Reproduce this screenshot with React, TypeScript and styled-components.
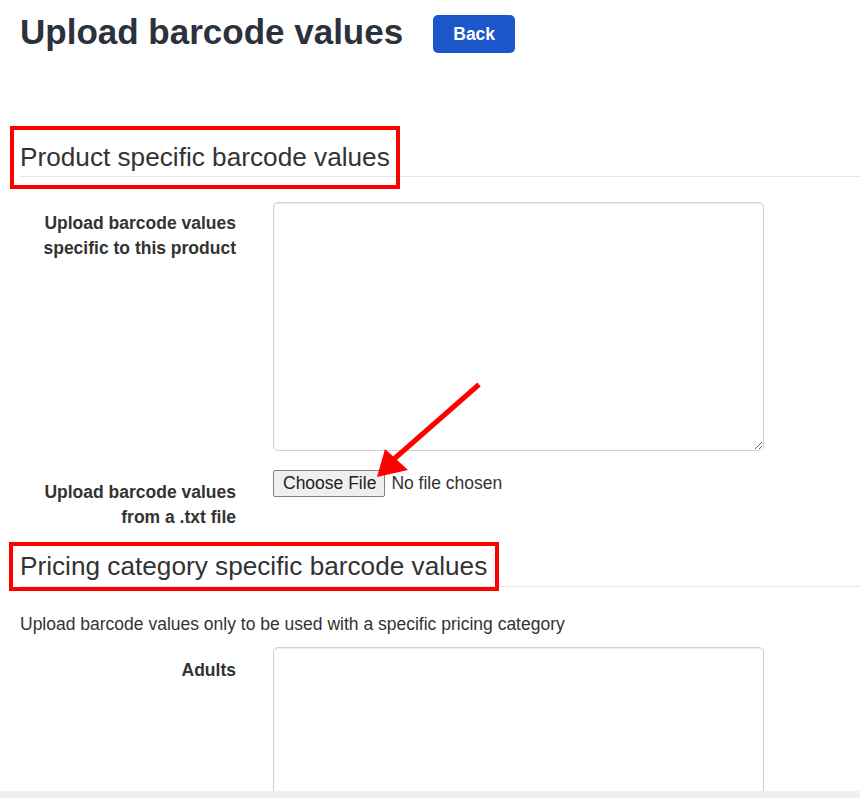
import React from "react";
import styled, { createGlobalStyle } from "styled-components";

const GlobalStyle = createGlobalStyle`
  html, body { margin: 0; padding: 0; background: #fff; }
  body { font-family: "Liberation Sans", Arial, sans-serif; color: #333; }
  * { box-sizing: border-box; }
`;

const Shell = styled.div`
  height: 100vh;
  display: grid;
  grid-template-rows: 1fr 7px;
  overflow: hidden;
`;

const Main = styled.main`
  overflow: hidden;
  padding: 13px 0 0 20px;
  position: relative;
`;

const ScrollTrack = styled.div`
  background: #f0f0f0;
`;

const Header = styled.header`
  display: flex;
  align-items: flex-start;
  gap: 30px;
`;

const Title = styled.h1`
  margin: 0;
  font-size: 35px;
  line-height: 1.1;
  font-weight: 700;
  color: #2b323b;
`;

const BackButton = styled.button`
  margin-top: 2px;
  width: 82px;
  height: 38px;
  border: none;
  border-radius: 5px;
  background: #1b57c8;
  color: #fff;
  font-family: "Liberation Sans", Arial, sans-serif;
  font-size: 17.5px;
  font-weight: 700;
  cursor: pointer;
`;

const SectionHeading = styled.h2<{ $mt: number }>`
  margin: ${(p) => p.$mt}px 0 0;
  font-size: 26.2px;
  line-height: 1.43;
  font-weight: 400;
  color: #333;
  border-bottom: 1px solid #e8e8e8;
`;

const HeadingText = styled.span`
  position: relative;
  display: inline-block;
`;

const Highlight = styled.span<{ $t: number; $r: number; $b: number; $l: number }>`
  position: absolute;
  top: ${(p) => p.$t}px;
  right: ${(p) => p.$r}px;
  bottom: ${(p) => p.$b}px;
  left: ${(p) => p.$l}px;
  border: 4px solid #ff0000;
  pointer-events: none;
`;

const FormRow = styled.div<{ $mt: number }>`
  display: grid;
  grid-template-columns: 216px 491px;
  column-gap: 37px;
  margin-top: ${(p) => p.$mt}px;
`;

const FieldLabel = styled.label<{ $pt: number }>`
  padding-top: ${(p) => p.$pt}px;
  text-align: right;
  font-size: 17.5px;
  line-height: 25px;
  font-weight: 700;
  color: #333;
`;

const TextArea = styled.textarea`
  display: block;
  width: 491px;
  height: 249px;
  border: 1px solid #cfcfcf;
  border-radius: 5px;
  box-shadow: inset 0 1px 1px rgba(0, 0, 0, 0.075);
  background: #fff;
  font-family: "Liberation Sans", Arial, sans-serif;
  font-size: 17.5px;
  resize: vertical;
`;

const FileControl = styled.div`
  position: relative;
  display: flex;
  align-items: center;
  gap: 6px;
  height: 27px;
`;

const FileButton = styled.button`
  height: 27px;
  padding: 0 8px 0 9px;
  border: 1px solid #808080;
  border-radius: 2px;
  background: #efefef;
  color: #222;
  font-family: "Liberation Sans", Arial, sans-serif;
  font-size: 17.5px;
  line-height: 1;
`;

const FileStatus = styled.span`
  font-size: 17.5px;
  color: #333;
`;

const ArrowOverlay = styled.svg`
  position: absolute;
  left: 97px;
  top: -92px;
  width: 115px;
  height: 105px;
  overflow: visible;
  pointer-events: none;
`;

const Intro = styled.p`
  margin: 25px 0 10px;
  font-size: 17.5px;
  line-height: 25px;
  color: #333;
`;

export default function App() {
  return (
    <>
      <GlobalStyle />
      <Shell>
        <Main>
          <Header>
            <Title>Upload barcode values</Title>
            <BackButton>Back</BackButton>
          </Header>

          <SectionHeading $mt={86}>
            <HeadingText>
              Product specific barcode values
              <Highlight $t={-13} $r={-10} $b={-13} $l={-10} />
            </HeadingText>
          </SectionHeading>

          <FormRow $mt={25}>
            <FieldLabel $pt={9}>
              Upload barcode values specific to this product
            </FieldLabel>
            <TextArea />
          </FormRow>

          <FormRow $mt={19}>
            <FieldLabel $pt={10}>Upload barcode values from a .txt file</FieldLabel>
            <FileControl>
              <FileButton>Choose File</FileButton>
              <FileStatus>No file chosen</FileStatus>
              <ArrowOverlay viewBox="0 0 115 105">
                <line x1="109" y1="6.5" x2="24" y2="81" stroke="#ff0000" strokeWidth="5" />
                <polygon points="7,99 15,71 38,92" fill="#ff0000" />
              </ArrowOverlay>
            </FileControl>
          </FormRow>

          <SectionHeading $mt={18}>
            <HeadingText>
              Pricing category specific barcode values
              <Highlight $t={-6} $r={-12} $b={-5} $l={-11} />
            </HeadingText>
          </SectionHeading>

          <Intro>Upload barcode values only to be used with a specific pricing category</Intro>

          <FormRow $mt={0}>
            <FieldLabel $pt={11}>Adults</FieldLabel>
            <TextArea />
          </FormRow>
        </Main>
        <ScrollTrack />
      </Shell>
    </>
  );
}
